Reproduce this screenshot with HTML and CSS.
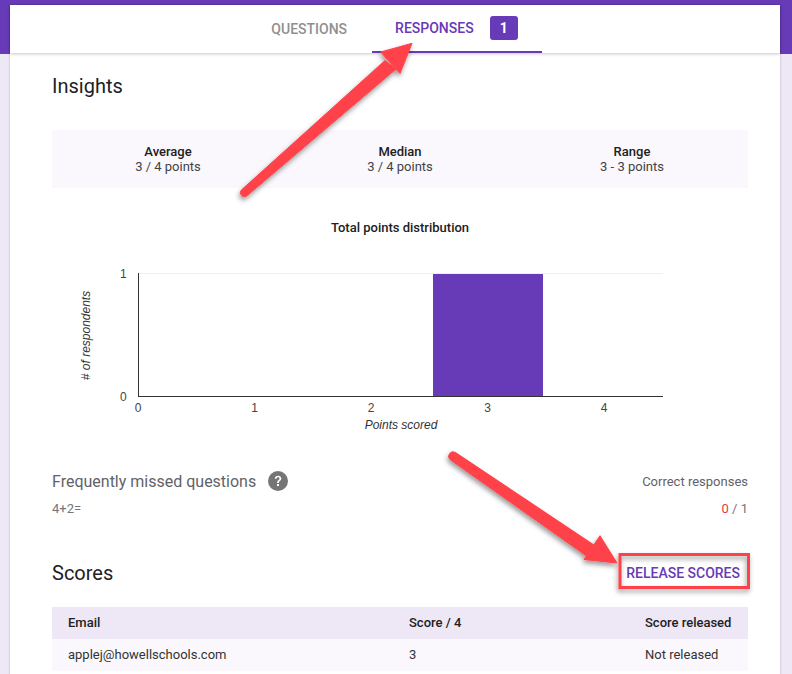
FILE: index.html
```html
<!DOCTYPE html>
<html lang="en">
<head>
<meta charset="utf-8">
<title>Responses</title>
<link rel="stylesheet" href="styles.css">
</head>
<body>
<main class="card">
  <nav class="tabs">
    <div class="tab">QUESTIONS</div>
    <div class="tab tab-active">RESPONSES<span class="badge">1</span></div>
  </nav>
  <div class="content">
    <h2 class="title insights-title">Insights</h2>
    <div class="stats">
      <div class="stat"><strong>Average</strong><span>3 / 4 points</span></div>
      <div class="stat"><strong>Median</strong><span>3 / 4 points</span></div>
      <div class="stat"><strong>Range</strong><span>3 - 3 points</span></div>
    </div>
    <h3 class="chart-title">Total points distribution</h3>
    <svg class="chart" width="696" height="174" viewBox="52 259 696 174" aria-label="Total points distribution chart">
      <line x1="138" y1="273.5" x2="663" y2="273.5" stroke="#f0f0f0"/>
      <rect x="433" y="274" width="110" height="122" fill="#673ab7"/>
      <line x1="138.5" y1="273" x2="138.5" y2="397" stroke="#333"/>
      <line x1="138" y1="396.5" x2="663" y2="396.5" stroke="#333"/>
      <g class="tick">
        <text x="120" y="278">1</text>
        <text x="120" y="401">0</text>
        <text x="138" y="412" text-anchor="middle">0</text>
        <text x="254.500" y="412" text-anchor="middle">1</text>
        <text x="371" y="412" text-anchor="middle">2</text>
        <text x="487.500" y="412" text-anchor="middle">3</text>
        <text x="604" y="412" text-anchor="middle">4</text>
      </g>
      <text class="axis-label" x="401" y="429" text-anchor="middle">Points scored</text>
      <text class="axis-label" transform="translate(90 335.500) rotate(-90)" text-anchor="middle">
        # of respondents</text>
    </svg>
    <div class="missed-head">
      <div class="missed-title">Frequently missed questions
        <svg class="help" width="20" height="20" viewBox="0 0 20 20" aria-hidden="true">
          <circle cx="10" cy="10" r="10" fill="#757575"/>
          <path d="M6.800 7.800C6.800 5.900 8.200 4.700 10.100 4.700C12 4.700 13.300 5.800 13.300 7.500C13.300 8.800 12.600 9.400 11.800 10C11 10.600 10.900 11 10.900 12H9.100C9.100 10.600 9.400 10 10.400 9.200C11.100 8.700 11.500 8.300 11.500 7.600C11.500 6.800 10.900 6.300 10.100 6.300C9.200 6.300 8.600 6.900 8.600 7.800Z" fill="#fff"/>
          <rect x="9" y="13" width="2" height="2" fill="#fff"/>
        </svg>
      </div>
      <div class="missed-side">Correct responses</div>
    </div>
    <div class="missed-row">
      <span>4+2=</span>
      <span class="ratio"><span class="wrong">0</span> / 1</span>
    </div>
    <div class="scores-head">
      <h2 class="title">Scores</h2>
      <div class="release">RELEASE SCORES</div>
    </div>
    <table class="table">
      <thead>
        <tr><th>Email</th><th>Score / 4</th><th>Score released</th></tr>
      </thead>
      <tbody>
        <tr><td>applej@howellschools.com</td><td>3</td><td>Not released</td></tr>
      </tbody>
    </table>
  </div>
</main>
<svg class="annotations" width="792" height="674" viewBox="0 0 792 674" aria-hidden="true">
  <defs>
    <filter id="shadow" x="-20%" y="-20%" width="140%" height="140%">
      <feDropShadow dx="-1" dy="3" stdDeviation="2.500" flood-color="#000" flood-opacity="0.4"/>
    </filter>
  </defs>
  <g filter="url(#shadow)" fill="#ff4348" stroke="#ff4348">
    <path d="M241.300 190.100A4 4 0 0 0 246.700 195.900L396 69L385 60.500Z" stroke-width="1" stroke-linejoin="round"/>
    <path d="M412 43.300L380.700 52L400 73.500Z" stroke-width="1" stroke-linejoin="round"/>
    <path d="M455.200 452.300A4.500 4.500 0 0 0 450.200 459.700L588 557L595.500 546Z" stroke-width="1" stroke-linejoin="round"/>
    <path d="M617 563L584 559.500L600 535.700Z" stroke-width="1" stroke-linejoin="round"/>
    <rect x="620" y="554.500" width="128.500" height="33" fill="none" stroke-width="3"/>
  </g>
</svg>
</body>
</html>
```
FILE: styles.css
```css
* { box-sizing: border-box; }
html, body { margin: 0; height: 674px; overflow: hidden; }
body {
  position: relative;
  padding: 5px 12px 0 10px;
  background: linear-gradient(#673ab7 54px, #ede7f6 54px);
  font-family: Roboto, "Liberation Sans", sans-serif;
  color: #212121;
}
.card {
  background: #fff;
  height: 700px;
  box-shadow: 0 0 2px rgba(0, 0, 0, 0.25);
}
.tabs {
  display: flex;
  justify-content: center;
  height: 48px;
  box-shadow: 0 1px 3px rgba(0, 0, 0, 0.22);
  font-size: 14px;
  font-weight: 500;
  color: #8f8f8f;
}
.tab {
  display: flex;
  align-items: center;
  padding: 0 25px 1px 23px;
}
.tab-active {
  color: #673ab7;
  border-bottom: 2px solid #673ab7;
  padding: 0 24px 0 23px;
}
.badge {
  display: flex;
  align-items: center;
  justify-content: center;
  width: 28px;
  height: 24px;
  margin-left: 16px;
  border-radius: 3px;
  background: #673ab7;
  color: #fff;
  font-weight: 700;
}
.content { padding: 0 32px 0 42px; }
.title {
  margin: 0;
  font-size: 20px;
  line-height: 28px;
  font-weight: 400;
  color: #202124;
}
.insights-title { margin-top: 19px; }
.stats {
  display: grid;
  grid-template-columns: repeat(3, 1fr);
  height: 58px;
  margin-top: 30px;
  background: #faf8fd;
  text-align: center;
  font-size: 13px;
  line-height: 15px;
}
.stat {
  display: flex;
  flex-direction: column;
  justify-content: center;
  color: #424242;
}
.stat strong { font-weight: 500; color: #212121; }
.chart-title {
  margin: 32px 0 0;
  font-size: 13px;
  line-height: 16px;
  font-weight: 500;
  text-align: center;
  color: #212121;
}
.chart {
  display: block;
  margin-top: 23px;
  font-family: "Liberation Sans", Arial, sans-serif;
  font-size: 12px;
}
.tick text { fill: #444; }
.axis-label { font-style: italic; fill: #333; }
.missed-head {
  display: flex;
  justify-content: space-between;
  align-items: center;
  height: 20px;
  margin-top: 38px;
}
.missed-title {
  display: flex;
  align-items: center;
  font-size: 16px;
  color: #5f6368;
}
.help { margin-left: 12px; }
.missed-side { font-size: 13px; color: #5f6368; }
.missed-row {
  display: flex;
  justify-content: space-between;
  margin-top: 10px;
  font-size: 13px;
  line-height: 16px;
  color: #757575;
}
.wrong { color: #e53945; }
.scores-head {
  display: flex;
  justify-content: space-between;
  align-items: center;
  height: 32px;
  margin-top: 40px;
}
.release {
  padding-right: 8px;
  font-size: 14px;
  font-weight: 500;
  color: #673ab7;
}
.table {
  width: 100%;
  margin-top: 18px;
  border-collapse: collapse;
  font-size: 13px;
}
.table th, .table td {
  height: 32px;
  padding: 0 16px 2px;
  text-align: left;
  font-weight: 400;
}
.table th { background: #ede7f6; font-weight: 500; }
.table td { background: #faf8fd; color: #333; }
.table th:nth-child(1), .table td:nth-child(1) { width: 341px; }
.table th:nth-child(3), .table td:nth-child(3) { width: 135px; padding-left: 32px; }
.annotations { position: absolute; top: 0; left: 0; pointer-events: none; }
```
